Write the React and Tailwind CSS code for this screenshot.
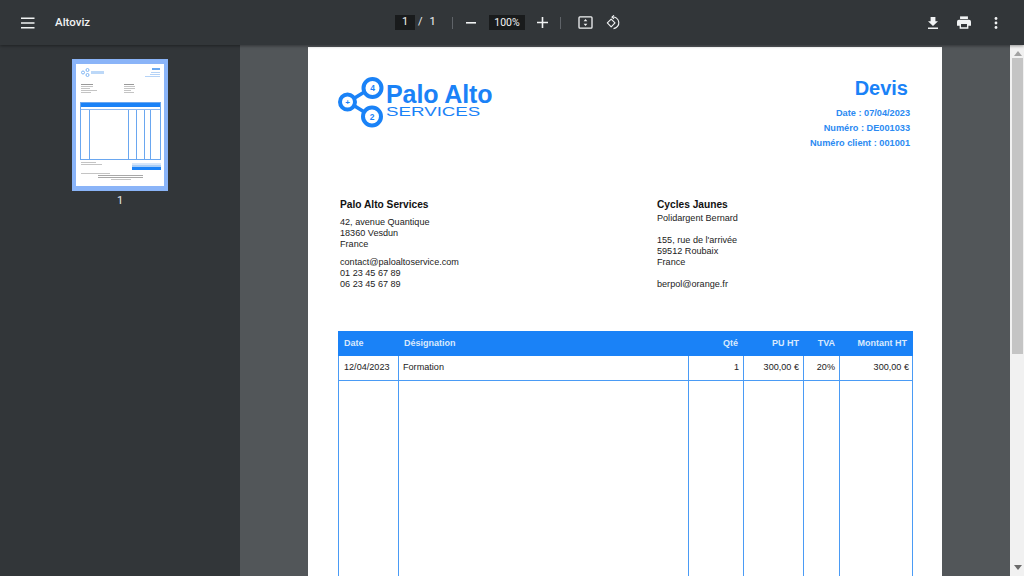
import React from 'react';

const BLUE = '#1a82f7';

// Simple toolbar icons, drawn the way the PDF viewer draws them
const MenuIcon = () => (
  <svg width="16" height="12" viewBox="0 0 16 12" fill="none" stroke="#f1f3f4" strokeWidth="1.6">
    <path d="M1 1.2h13.500M1 6h13.500M1 10.800h13.500" />
  </svg>
);

const FitIcon = () => (
  <svg width="15" height="13" viewBox="0 0 16 14" fill="none">
    <rect x="1" y="1" width="14" height="12" rx="1" stroke="#f1f3f4" strokeWidth="1.4" />
    <path d="M8 3.200 10 5.600H6zM8 10.800 6 8.400h4z" fill="#f1f3f4" />
  </svg>
);

const RotateIcon = () => (
  <svg width="15" height="15" viewBox="0 0 16 16" fill="none" stroke="#f1f3f4" strokeWidth="1.2">
    <path d="M5.500 4.400 1.400 8.500l4.100 4.100 4.100-4.100z" strokeLinejoin="round" />
    <path d="M6.500 2.200a6.200 6.200 0 1 1 1.500 12.300" />
    <path d="M8.500.4 6.300 2.200 8.500 4" strokeLinejoin="round" />
  </svg>
);

const DownloadIcon = () => (
  <svg width="12" height="12" viewBox="0 0 12 12" fill="#f1f3f4">
    <path d="M3.600 0h4.800v4.200H11L6 9 1 4.200h2.600zM1 10.600h10V12H1z" />
  </svg>
);

const PrintIcon = () => (
  <svg width="14" height="13" viewBox="0 0 16 14" fill="#f1f3f4">
    <path d="M3.500 0h9v3h-9z" />
    <path fillRule="evenodd" d="M2.200 3.800h11.600A2.200 2.200 0 0 1 16 6v4.600h-3V14H3v-3.400H0V6a2.200 2.200 0 0 1 2.200-2.200zM4.600 8.600v3.800h6.800V8.600z" />
  </svg>
);

const DotsIcon = () => (
  <svg width="4" height="12" viewBox="0 0 4 12" fill="#f1f3f4">
    <circle cx="2" cy="1.500" r="1.400" />
    <circle cx="2" cy="6" r="1.400" />
    <circle cx="2" cy="10.500" r="1.400" />
  </svg>
);

const Logo = () => (
  <svg width="48" height="54" viewBox="0 0 48 54" fill="none" stroke={BLUE} className="shrink-0">
    <path d="M15 23 28 15M15 29 28 37" strokeWidth="3.600" />
    <circle cx="9.500" cy="26" r="7.500" strokeWidth="4" fill="#fff" />
    <circle cx="34.500" cy="12" r="9" strokeWidth="4" fill="#fff" />
    <circle cx="34" cy="40.500" r="9" strokeWidth="4" fill="#fff" />
    <text x="9.500" y="29" fontSize="8" fontWeight="700" fill={BLUE} stroke="none" textAnchor="middle" fontFamily="Liberation Sans, sans-serif">+</text>
    <text x="34.500" y="15" fontSize="8.500" fontWeight="700" fill={BLUE} stroke="none" textAnchor="middle" fontFamily="Liberation Sans, sans-serif">4</text>
    <text x="34" y="43.500" fontSize="8.500" fontWeight="700" fill={BLUE} stroke="none" textAnchor="middle" fontFamily="Liberation Sans, sans-serif">2</text>
  </svg>
);

const Thumbnail = () => (
  <div className="w-[96px] h-[132px] border-[5px] border-x-[4px] border-[#8ab4f8] bg-white pl-[4px] pr-[3px] pt-[3px] overflow-hidden">
    <div className="flex justify-between items-start h-[15px]">
      <div className="flex items-center ml-[1px] mt-[1px]">
        <svg width="9" height="9" viewBox="0 0 9 9" fill="none" stroke="#7fb5f3" strokeWidth="1">
          <circle cx="2" cy="4.500" r="1.500" />
          <circle cx="6.500" cy="2" r="1.500" />
          <circle cx="6.500" cy="7" r="1.500" />
        </svg>
        <div className="w-[13px] h-[3px] ml-[1px] bg-[#bcd8f8]" />
      </div>
      <div className="flex flex-col items-end gap-[1px] pr-[1px] mt-[1px]">
        <div className="w-[8px] h-[2px] bg-[#6aa9f0]" />
        <div className="w-[9px] h-[1px] mt-[1px] bg-[#b5d3f7]" />
        <div className="w-[10px] h-[1px] bg-[#b5d3f7]" />
        <div className="w-[15px] h-[1px] bg-[#b5d3f7]" />
      </div>
    </div>
    <div className="flex gap-[27px] h-[14px] mt-[2px] pl-[1px]">
      <div className="flex flex-col gap-[1px]">
        <div className="w-[12px] h-[1px] bg-[#9a9a9a]" />
        <div className="w-[12px] h-[1px] bg-[#c4c4c4]" />
        <div className="w-[9px] h-[1px] bg-[#c4c4c4]" />
        <div className="w-[16px] h-[1px] bg-[#c4c4c4]" />
        <div className="w-[10px] h-[1px] bg-[#c4c4c4]" />
      </div>
      <div className="flex flex-col gap-[1px]">
        <div className="w-[10px] h-[1px] bg-[#9a9a9a]" />
        <div className="w-[11px] h-[1px] bg-[#c4c4c4]" />
        <div className="w-[11px] h-[1px] bg-[#c4c4c4]" />
        <div className="w-[7px] h-[1px] bg-[#c4c4c4]" />
        <div className="w-[10px] h-[1px] bg-[#c4c4c4]" />
      </div>
    </div>
    <div className="h-[58px] mt-[4px] border border-[#6aa7f0] flex flex-col">
      <div className="h-[4px] shrink-0 bg-[#1a82f7]" />
      <div className="h-[3px] shrink-0 border-b border-[#8ab8f2]" />
      <div className="flex-1 flex">
        <div className="w-[9px] border-r border-[#6aa7f0]" />
        <div className="w-[39px] border-r border-[#6aa7f0]" />
        <div className="w-[8px] border-r border-[#6aa7f0]" />
        <div className="w-[8px] border-r border-[#6aa7f0]" />
        <div className="w-[6px] border-r border-[#6aa7f0]" />
      </div>
    </div>
    <div className="flex justify-between mt-[2px] pl-[1px]">
      <div className="flex flex-col gap-[1px]">
        <div className="w-[15px] h-[1px] bg-[#c4c4c4]" />
        <div className="w-[21px] h-[1px] bg-[#c4c4c4]" />
      </div>
      <div className="flex flex-col w-[29px] mt-[1px]">
        <div className="h-[2px] bg-[#d5e6fb]" />
        <div className="h-[2px] bg-[#a9cdf5]" />
        <div className="h-[3px] bg-[#1a82f7]" />
      </div>
    </div>
    <div className="w-[29px] h-[1px] mt-[3px] ml-[1px] bg-[#c4c4c4]" />
    <div className="flex flex-col items-center gap-[1px] mt-[1px]">
      <div className="w-[45px] h-[1px] bg-[#a8a8a8]" />
      <div className="w-[45px] h-[1px] bg-[#a8a8a8]" />
      <div className="w-[20px] h-[1px] bg-[#c4c4c4]" />
    </div>
  </div>
);

const cols = [
  { label: 'Date', value: '12/04/2023', w: 'w-[61px]', head: 'text-left pl-[6px]', cell: 'text-left pl-[5px]' },
  { label: 'Désignation', value: 'Formation', w: 'w-[290px]', head: 'text-left pl-[5px]', cell: 'text-left pl-[4px]' },
  { label: 'Qté', value: '1', w: 'w-[55px]', head: 'text-right pr-[6px]', cell: 'text-right pr-[4px]' },
  { label: 'PU HT', value: '300,00 €', w: 'w-[60px]', head: 'text-right pr-[5px]', cell: 'text-right pr-[4px]' },
  { label: 'TVA', value: '20%', w: 'w-[36px]', head: 'text-right pr-[5px]', cell: 'text-right pr-[4px]' },
  { label: 'Montant HT', value: '300,00 €', w: 'flex-1', head: 'text-right pr-[6px]', cell: 'text-right pr-[3px]' },
];

export default function App() {
  return (
    <div className="w-[1024px] h-[576px] overflow-hidden flex flex-col bg-[#525659] font-['Liberation_Sans',Arial,sans-serif]">
      {/* toolbar */}
      <header className="relative z-10 h-[45px] shrink-0 bg-[#323639] shadow-[0_1px_3px_rgba(0,0,0,0.4)] flex items-center text-[#f1f3f4] font-['Roboto',sans-serif]">
        <div className="w-[340px] flex items-center pl-[20px]">
          <MenuIcon />
          <span className="ml-[19px] text-[11.5px] font-medium">Altoviz</span>
        </div>
        <div className="flex items-center text-[11px] ml-[55px]">
          <span className="w-[20px] h-[15px] bg-[#191b1c] flex items-center justify-center">1</span>
          <span className="ml-[3px] w-[4px] text-center">/</span>
          <span className="ml-[7px] w-[7px] text-center">1</span>
          <span className="ml-[16px] w-px h-[12px] bg-[#5f6368]" />
          <svg width="10" height="2" viewBox="0 0 10 2" className="ml-[13px]" fill="#f1f3f4"><path d="M0 0h10v1.600H0z" /></svg>
          <span className="ml-[13px] w-[36px] h-[15px] bg-[#191b1c] flex items-center justify-center text-[10.5px]">100%</span>
          <svg width="11" height="11" viewBox="0 0 11 11" className="ml-[12px]" fill="#f1f3f4"><path d="M4.700 0h1.600v4.700H11v1.600H6.300V11H4.700V6.300H0V4.700h4.700z" /></svg>
          <span className="ml-[12px] w-px h-[12px] bg-[#5f6368]" />
          <span className="ml-[17px] flex"><FitIcon /></span>
          <span className="ml-[13px] flex"><RotateIcon /></span>
        </div>
        <div className="ml-auto flex items-center pr-[26px]">
          <DownloadIcon />
          <span className="ml-[18px] flex"><PrintIcon /></span>
          <span className="ml-[23px] flex"><DotsIcon /></span>
        </div>
      </header>

      <div className="flex-1 flex min-h-0">
        {/* thumbnails */}
        <aside className="w-[240px] shrink-0 bg-[#323639] flex flex-col items-center pt-[14px] font-['Roboto',sans-serif]">
          <Thumbnail />
          <span className="mt-[2px] text-[11px] text-[#e8eaed]">1</span>
        </aside>

        {/* document area */}
        <main className="flex-1 flex min-w-0 bg-[#525659]">
          <div className="flex-1 flex pt-[2px] pl-[68px] overflow-hidden">
            <article className="w-[634px] shrink-0 h-[560px] bg-white pt-[29px] pl-[30px] pr-[29px] text-[#222]">
              <div className="flex justify-between h-[122px]">
                <div className="flex items-start">
                  <Logo />
                  <div className="mt-[6px] text-[#1a82f7]">
                    <div className="text-[25px] leading-[24px] font-bold tracking-[-0.1px]">Palo Alto</div>
                    <div className="w-max mt-[1px] text-[13px] leading-[10px] origin-left scale-x-[1.44]">SERVICES</div>
                  </div>
                </div>
                <div className="text-right text-[#2b8af2] font-bold text-[9.200px] pr-[3px]">
                  <div className="text-[20px] leading-[24px] pr-[2px] text-[#1a82f7]">Devis</div>
                  <div className="mt-[6px] leading-[15px]">Date : 07/04/2023</div>
                  <div className="leading-[15px]">Numéro : DE001033</div>
                  <div className="leading-[15px]">Numéro client : 001001</div>
                </div>
              </div>

              <div className="flex h-[133px] pl-[2px] text-[9.100px] leading-[11px]">
                <div className="w-[317px]">
                  <div className="text-[10.200px] leading-[14px] font-bold text-[#111]">Palo Alto Services</div>
                  <div className="mt-[5px]">42, avenue Quantique</div>
                  <div>18360 Vesdun</div>
                  <div>France</div>
                  <div className="mt-[7px]">contact@paloaltoservice.com</div>
                  <div>01 23 45 67 89</div>
                  <div>06 23 45 67 89</div>
                </div>
                <div>
                  <div className="text-[10.200px] leading-[14px] font-bold text-[#111]">Cycles Jaunes</div>
                  <div className="mt-[1px]">Polidargent Bernard</div>
                  <div className="mt-[11px]">155, rue de l'arrivée</div>
                  <div>59512 Roubaix</div>
                  <div>France</div>
                  <div className="mt-[11px]">berpol@orange.fr</div>
                </div>
              </div>

              {/* table */}
              <div className="w-[575px] h-[300px] border-x border-[#4a9bf5] flex flex-col">
                <div className="flex h-[25px] shrink-0 -mx-px bg-[#1a82f7] text-[#d8e9fd] font-bold text-[9px] leading-[25px]">
                  {cols.map((c) => (
                    <div key={c.label} className={`${c.w} ${c.head} shrink-0`}>{c.label}</div>
                  ))}
                </div>
                <div className="flex h-[25px] shrink-0 border-b border-[#4a9bf5] text-[9.100px] leading-[23px] text-[#222]">
                  {cols.map((c, i) => (
                    <div key={c.label} className={`${i === 0 ? 'w-[60px]' : c.w} ${c.cell} ${i < 5 ? 'border-r border-[#4a9bf5]' : ''} shrink-0`}>{c.value}</div>
                  ))}
                </div>
                <div className="flex flex-1">
                  {cols.map((c, i) => (
                    <div key={c.label} className={`${i === 0 ? 'w-[60px]' : c.w} ${i < 5 ? 'border-r border-[#4a9bf5]' : ''} shrink-0`} />
                  ))}
                </div>
              </div>
            </article>
          </div>

          {/* scrollbar */}
          <div className="w-[14px] shrink-0 bg-[#f1f1f1] flex flex-col items-center pl-[1px]">
            <svg width="8" height="5" viewBox="0 0 8 5" className="mt-[6px] shrink-0" fill="#a3a3a3"><path d="M4 0l4 5H0z" /></svg>
            <div className="w-[11px] h-[296px] mt-[2px] shrink-0 bg-[#c4c4c4]" />
            <svg width="8" height="5" viewBox="0 0 8 5" className="mt-auto mb-[6px] shrink-0" fill="#6b6b6b"><path d="M4 5 8 0H0z" /></svg>
          </div>
        </main>
      </div>
    </div>
  );
}
